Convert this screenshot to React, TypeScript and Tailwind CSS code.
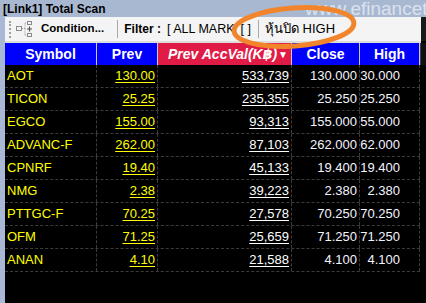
import React from 'react';

const rows = [
  { sym: 'AOT', prev: '130.00', acc: '533,739', close: '130.000', high: '130.000' },
  { sym: 'TICON', prev: '25.25', acc: '235,355', close: '25.250', high: '25.250' },
  { sym: 'EGCO', prev: '155.00', acc: '93,313', close: '155.000', high: '155.000' },
  { sym: 'ADVANC-F', prev: '262.00', acc: '87,103', close: '262.000', high: '262.000' },
  { sym: 'CPNRF', prev: '19.40', acc: '45,133', close: '19.400', high: '19.400' },
  { sym: 'NMG', prev: '2.38', acc: '39,223', close: '2.380', high: '2.380' },
  { sym: 'PTTGC-F', prev: '70.25', acc: '27,578', close: '70.250', high: '70.250' },
  { sym: 'OFM', prev: '71.25', acc: '25,659', close: '71.250', high: '71.250' },
  { sym: 'ANAN', prev: '4.10', acc: '21,588', close: '4.100', high: '4.100' },
];

const ConditionIcon = () => (
  <svg width="18" height="16" viewBox="0 0 18 16" className="shrink-0">
    <rect x="0.5" y="5.5" width="5" height="4" fill="#f4f4f4" stroke="#8a8a8a" />
    <path d="M6 7.5h3M9 7.5V2M9 2h2M9 7.5V14M9 14h2" stroke="#9a9a9a" strokeDasharray="1 1" fill="none" />
    <rect x="11.5" y="0.5" width="4" height="3" fill="#f4f4f4" stroke="#8a8a8a" />
    <rect x="11.5" y="12.5" width="4" height="3" fill="#f4f4f4" stroke="#8a8a8a" />
    <path d="M13.5 5.5v5M11 8h5" stroke="#505050" strokeWidth="1.2" fill="none" />
  </svg>
);

const HeadCell = ({ w, children, red }: { w: string; children: React.ReactNode; red?: boolean }) => (
  <div
    className={`${w} h-full shrink-0 flex items-center border-r border-[#c8c8c8] text-white font-bold text-[14px] ${
      red ? 'bg-[#e01c46] italic justify-end pr-[3px]' : 'bg-[#0000ff] justify-center'
    }`}
  >
    {children}
  </div>
);

export default function App() {
  return (
    <div className="relative w-[426px] h-[303px] overflow-hidden bg-black flex flex-col font-['Liberation_Sans','Noto_Sans','DejaVu_Sans',sans-serif]">
      {/* window caption */}
      <div className="h-[17px] shrink-0 bg-[#a8b8d0] flex items-center overflow-hidden">
        <span className="pl-[3px] text-[12px] font-bold text-black whitespace-nowrap leading-none">[Link1] Total Scan</span>
        <div className="flex-1" />
        <div className="w-[121px] shrink-0 overflow-hidden whitespace-nowrap text-[19px] leading-none text-[#dbe2ee]">
          www.efinancet
        </div>
      </div>

      <div className="flex flex-1 min-h-0">
        <div className="w-[5px] shrink-0 bg-[#a9b9d5]" />
        <div className="flex-1 flex flex-col">
          {/* toolbar */}
          <div className="h-[24px] shrink-0 flex">
            <div className="w-[416px] bg-[#f4f4f4] flex items-center text-black">
              <div className="ml-[4px] h-[17px] border-l-2 border-dotted border-[#a0a0a0]" />
              <div className="ml-[5px]">
                <ConditionIcon />
              </div>
              <span className="ml-[7px] text-[11.5px] font-bold whitespace-nowrap">Condition...</span>
              <div className="ml-[13px] h-[18px] border-l border-[#a8a8a8]" />
              <span className="ml-[6px] text-[12px] font-bold whitespace-nowrap">Filter :</span>
              <span className="ml-[6px] text-[12.5px] whitespace-nowrap">[ ALL MARK</span>
              <span className="ml-[6px] text-[12.5px] whitespace-nowrap">[ ]</span>
              <div className="ml-[7px] h-[18px] border-l border-[#a8a8a8]" />
              <span className="ml-[6px] text-[13px] whitespace-nowrap">หุ้นปิด HIGH</span>
            </div>
            <div className="flex-1 bg-[#1a1a1a]" />
          </div>
          <div className="h-[2px] shrink-0 bg-[#dcdcdc] w-[416px]" />

          {/* column headers */}
          <div className="h-[22px] shrink-0 flex">
            <HeadCell w="w-[92px]">Symbol</HeadCell>
            <HeadCell w="w-[61px]">Prev</HeadCell>
            <HeadCell w="w-[134px]" red>
              Prev AccVal(K฿)<span className="not-italic text-[10px] ml-[1px]">▼</span>
            </HeadCell>
            <HeadCell w="w-[68px]">Close</HeadCell>
            <HeadCell w="w-[60px]">High</HeadCell>
            <div className="flex-1 border-l border-[#404040] bg-[#101010]" />
          </div>

          {/* scan results */}
          <div className="flex flex-col text-[13px]">
            {rows.map((r) => (
              <div key={r.sym} className="h-[23px] flex">
                <div className="w-[415px] flex border-b border-dashed border-[#3c3c3c]">
                  <div className="w-[92px] shrink-0 flex items-center pl-[2px] text-[#ffff00] border-r border-dashed border-[#3c3c3c]">
                    {r.sym}
                  </div>
                  <div className="w-[61px] shrink-0 flex items-center justify-end pr-[2px] text-[#ffff00] underline underline-offset-2 border-r border-dashed border-[#3c3c3c]">
                    {r.prev}
                  </div>
                  <div className="w-[134px] shrink-0 flex items-center justify-end pr-[2px] text-white underline underline-offset-2 border-r border-dashed border-[#3c3c3c]">
                    {r.acc}
                  </div>
                  <div className="w-[68px] shrink-0 flex items-center justify-end pr-[2px] text-[#f4f4ff] border-r border-dashed border-[#3c3c3c]">
                    {r.close}
                  </div>
                  <div className="w-[60px] shrink-0 flex items-center justify-end pr-[19px] overflow-hidden whitespace-nowrap text-[#f4f4ff] border-r border-dashed border-[#3c3c3c]">
                    {r.high}
                  </div>
                </div>
              </div>
            ))}
          </div>
        </div>
      </div>

      {/* orange highlight ring drawn over the toolbar */}
      <svg className="absolute left-[228px] top-[3px] pointer-events-none" width="132" height="48" viewBox="0 0 132 48">
        <ellipse cx="66" cy="24" rx="60" ry="19" fill="none" stroke="#f2852c" strokeWidth="5" transform="rotate(-4 66 24)" />
      </svg>
    </div>
  );
}
